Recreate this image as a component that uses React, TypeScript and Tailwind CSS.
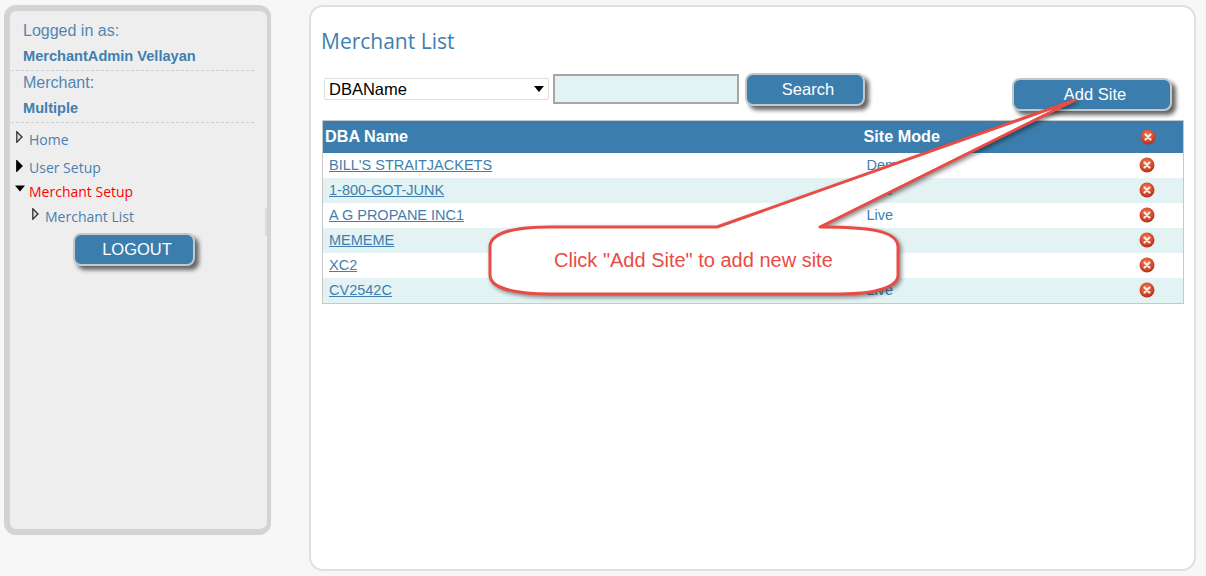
import React from 'react';

const SITES = [
  { name: "BILL'S STRAITJACKETS", mode: 'Demo' },
  { name: '1-800-GOT-JUNK', mode: 'Live' },
  { name: 'A G PROPANE INC1', mode: 'Live' },
  { name: 'MEMEME', mode: 'Live' },
  { name: 'XC2', mode: 'Live' },
  { name: 'CV2542C', mode: 'Live' },
];

const ARIAL = 'font-["Liberation_Sans",Arial,sans-serif]';

function DeleteIcon() {
  return (
    <svg width="16" height="16" viewBox="0 0 16 16" className="block">
      <defs>
        <radialGradient id="del" cx="45%" cy="35%" r="70%">
          <stop offset="0%" stopColor="#ef7b52" />
          <stop offset="65%" stopColor="#d2452a" />
          <stop offset="100%" stopColor="#a52a1c" />
        </radialGradient>
      </defs>
      <circle cx="8" cy="8" r="7.5" fill="url(#del)" />
      <path d="M5.5 5.5l5 5M10.5 5.5l-5 5" stroke="#fbeee8" strokeWidth="2.2" strokeLinecap="round" />
    </svg>
  );
}

function Arrow({ kind }: { kind: 'open' | 'solid' | 'down' }) {
  if (kind === 'down') {
    return (
      <svg width="12" height="7" viewBox="0 0 12 7" className="block">
        <path d="M1 0.5h10L6 6.5z" fill="#000" />
      </svg>
    );
  }
  return (
    <svg width="7" height="12" viewBox="0 0 7 12" className="block">
      <path
        d="M0.8 0.8L6 6 0.8 11.2z"
        fill={kind === 'solid' ? '#000' : '#ddd'}
        stroke={kind === 'solid' ? '#000' : '#333'}
        strokeWidth="1.3"
      />
    </svg>
  );
}

function BlueButton({ label, className }: { label: string; className: string }) {
  return (
    <button
      type="button"
      className={`rounded-[8px] border-2 border-[#c4c8cb] bg-[#3b7eae] pl-[6px] text-[16.5px] text-white shadow-[4px_4px_4px_#666] ${ARIAL} ${className}`}
    >
      {label}
    </button>
  );
}

function Sidebar() {
  return (
    <aside className="relative ml-[4px] mt-[5px] h-[530px] w-[267px] rounded-[12px] border-[6px] border-r-[4px] border-[#d3d3d3] bg-[#eeeeee] text-[#3f7fb0]">
      <div className={`${ARIAL}`}>
        <div className="ml-[1px] mr-[13px] h-[60px] border-b border-dashed border-[#cfcfcf] pl-[12px]">
          <div className="pt-[11px] text-[16px] leading-[18px] text-[#5186b4]">Logged in as:</div>
          <div className="pt-[7px] text-[14.6px] font-bold leading-[18px]">MerchantAdmin Vellayan</div>
        </div>
        <div className="ml-[1px] mr-[13px] h-[52px] border-b border-dashed border-[#cfcfcf] pl-[12px]">
          <div className="pt-[3px] text-[16px] leading-[18px] text-[#5186b4]">Merchant:</div>
          <div className="pt-[7px] text-[14.6px] font-bold leading-[18px]">Multiple</div>
        </div>
      </div>
      <nav className='font-["Open_Sans",sans-serif] text-[14px] text-[#4a7fb0]'>
        <div className="flex h-[28px] items-center pl-[6px] pt-[5px]">
          <span className="-mt-[5px] w-[13px]"><Arrow kind="open" /></span>
          <span>Home</span>
        </div>
        <div className="flex h-[28px] items-center pl-[6px] pt-[5px]">
          <span className="-mt-[3px] w-[13px]"><Arrow kind="solid" /></span>
          <span>User Setup</span>
        </div>
        <div className="flex h-[21px] items-center pl-[4px] pt-[3px] text-[#ff0000]">
          <span className="-mt-[6px] w-[15px]"><Arrow kind="down" /></span>
          <span>Merchant Setup</span>
        </div>
        <div className="flex h-[27px] items-center pl-[22px] pt-[6px]">
          <span className="-mt-[5px] w-[13px]"><Arrow kind="open" /></span>
          <span>Merchant List</span>
        </div>
      </nav>
      <div className="pl-[63px] pt-[6px]">
        <BlueButton label="LOGOUT" className="h-[33px] w-[122px]" />
      </div>
      <div className="absolute left-[255px] top-[197px] h-[28px] w-[2px] bg-[#dcdcdc]" />
    </aside>
  );
}

function Callout() {
  return (
    <div className="absolute left-[170px] top-[90px] h-[210px] w-[620px]">
      <svg width="620" height="210" viewBox="0 0 620 210" className="block" style={{ filter: 'drop-shadow(2px 2px 2px rgba(0,0,0,0.45))' }}>
        <path
          d="M236 130L594 3 339 130C385 130 417 133 417 150L417 178C417 190 395 197 360 197L70 197C30 197 9 190 9 178L9 150C9 137 30 130 70 130Z"
          fill="#fff"
          stroke="#e84c45"
          strokeWidth="3"
          strokeLinejoin="round"
        />
      </svg>
      <div className={`absolute left-[73px] top-[151px] whitespace-nowrap text-[20px] leading-[24px] text-[#e84c45] ${ARIAL}`}>
        Click "Add Site" to add new site
      </div>
    </div>
  );
}

function MainPanel() {
  return (
    <main className={`relative ml-[38px] mt-[5px] h-[566px] w-[887px] rounded-[14px] border-2 border-[#e0e0e0] bg-white pl-[11px] pr-[10px] ${ARIAL}`}>
      <h1 className='-ml-px pt-[18px] font-["Open_Sans",sans-serif] text-[21px] leading-[32px] text-[#3f7fb0]'>Merchant List</h1>
      <div className="relative flex h-[63px] items-start pl-[2px] pt-[15px]">
        <div className="mt-[6px] flex h-[22px] w-[225px] items-center justify-between rounded-[2px] border border-[#dddddd] bg-white pl-[4px] pr-[3px] text-[16.5px] text-black">
          <span>DBAName</span>
          <svg width="12" height="6" viewBox="0 0 12 6"><path d="M1 0h10L6 6z" fill="#000" /></svg>
        </div>
        <div className="ml-[4px] mt-[2px] h-[30px] w-[186px] border-2 border-[#a6a6a6] bg-[#e3f2f2]" />
        <BlueButton label="Search" className="ml-[6px] mt-[1px] h-[33px] w-[120px]" />
        <BlueButton label="Add Site" className="absolute left-[690px] top-[21px] h-[33px] w-[160px]" />
      </div>
      <table className="w-[862px] table-fixed border-collapse border border-[#c8c8c8] text-[14.5px]">
        <thead>
          <tr className="h-[32px] bg-[#3b7eae] text-[16.2px] font-bold text-white">
            <th className="w-[541px] pb-[1px] pl-[2px] text-left">DBA Name</th>
            <th className="w-[265px] pb-[1px] text-left">Site Mode</th>
            <th><span className="ml-[11px] block w-[16px]"><DeleteIcon /></span></th>
          </tr>
        </thead>
        <tbody>
          {SITES.map((s, i) => (
            <tr key={s.name} className={`${i === 5 ? 'h-[26px]' : 'h-[25px]'} ${i % 2 === 1 ? 'bg-[#e3f2f2]' : 'bg-white'}`}>
              <td className="pl-[6px] pt-[1px]"><a className="text-[#3f7fb0] underline">{s.name}</a></td>
              <td className="pl-[3px] pt-[1px] text-[#3f7fb0]">{s.mode}</td>
              <td><span className="ml-[10px] block w-[16px]"><DeleteIcon /></span></td>
            </tr>
          ))}
        </tbody>
      </table>
      <Callout />
    </main>
  );
}

export default function App() {
  return (
    <div className="flex h-[576px] w-[1206px] items-start overflow-hidden bg-[#f7f7f7]">
      <Sidebar />
      <MainPanel />
    </div>
  );
}
